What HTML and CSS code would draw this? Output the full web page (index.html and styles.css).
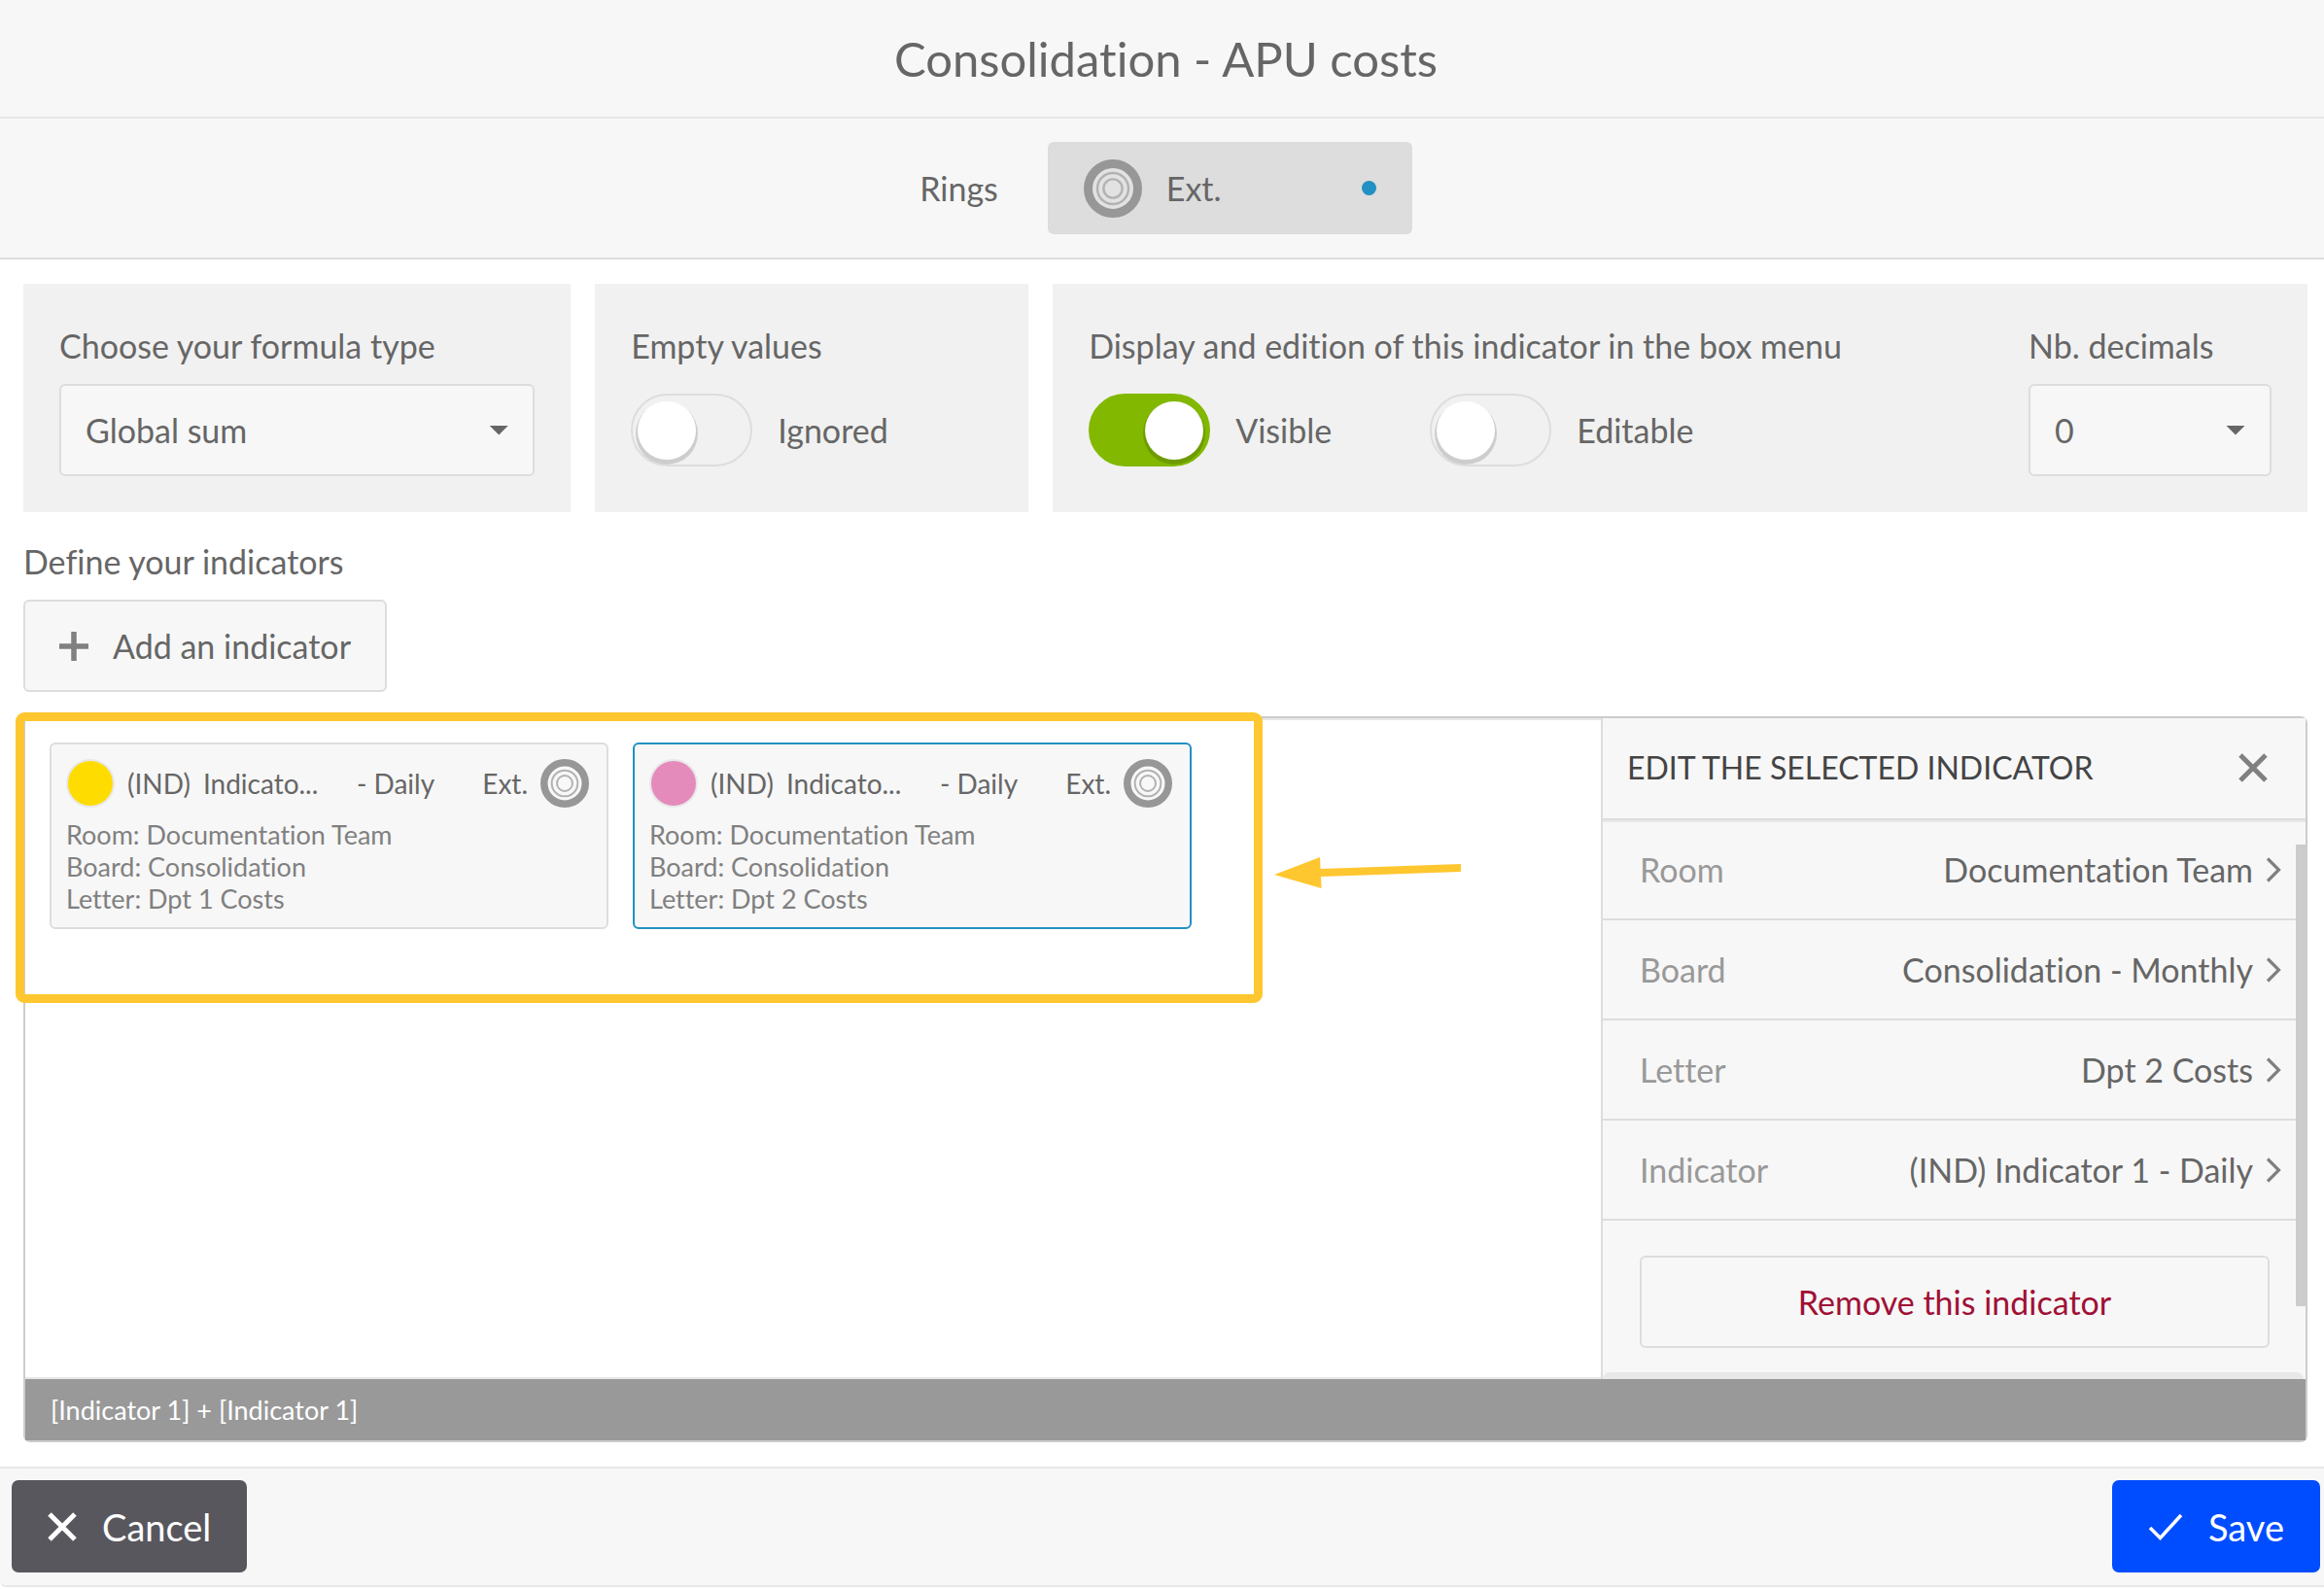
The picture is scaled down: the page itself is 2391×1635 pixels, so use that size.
FILE: index.html
```
<!DOCTYPE html>
<html lang="en">
<head>
<meta charset="utf-8">
<meta name="viewport" content="width=device-width, initial-scale=1">
<title>Consolidation - APU costs</title>
<link rel="stylesheet" href="styles.css">
</head>
<body>
<svg class="sprite" aria-hidden="true">
  <symbol id="ring" viewBox="0 0 60 60">
    <circle cx="30" cy="30" r="25.5" fill="#fff" fill-opacity=".15" stroke="#979797" stroke-width="9"/>
    <circle cx="30" cy="30" r="16" fill="none" stroke="#b2b2b2" stroke-width="2.4"/>
    <circle cx="30" cy="30" r="9.6" fill="none" stroke="#b2b2b2" stroke-width="2.4"/>
  </symbol>
  <symbol id="cross" viewBox="0 0 30 30">
    <path d="M2 2 28 28M28 2 2 28" fill="none" stroke="currentColor" stroke-width="5"/>
  </symbol>
  <symbol id="chevron" viewBox="0 0 16 26">
    <path d="M2 1.500 13.500 13 2 24.500" fill="none" stroke="currentColor" stroke-width="3.200"/>
  </symbol>
</svg>

<header class="titlebar"><h1 class="title">Consolidation - APU costs</h1></header>

<div class="rings">
  <span class="rings-label">Rings</span>
  <button class="ring-button" type="button">
    <svg class="ring-large"><use href="#ring"/></svg>
    <span class="ring-name">Ext.</span>
    <span class="status-dot"></span>
  </button>
</div>

<main class="content">
  <div class="options">
    <section class="option">
      <label class="option-label" for="formula">Choose your formula type</label>
      <div class="select-box">
        <select class="select" id="formula"><option>Global sum</option></select>
      </div>
    </section>
    <section class="option">
      <h2 class="option-label">Empty values</h2>
      <div class="controls">
        <label class="switch"><input class="toggle" type="checkbox">Ignored</label>
      </div>
    </section>
    <section class="option option-split">
      <div class="display-options">
        <h2 class="option-label">Display and edition of this indicator in the box menu</h2>
        <div class="controls">
          <label class="switch"><input class="toggle" type="checkbox" checked>Visible</label>
          <label class="switch"><input class="toggle" type="checkbox">Editable</label>
        </div>
      </div>
      <div class="decimals">
        <label class="option-label" for="decimals">Nb. decimals</label>
        <div class="select-box">
          <select class="select" id="decimals"><option>0</option></select>
        </div>
      </div>
    </section>
  </div>

  <h2 class="section-label">Define your indicators</h2>
  <button class="outline-button add-button" type="button">
    <svg class="icon" viewBox="0 0 30 30"><path d="M15 0V30M0 15H30" stroke="#808080" stroke-width="5.500"/></svg>
    Add an indicator
  </button>

  <section class="workspace">
    <div class="workspace-main">
      <div class="canvas">
        <article class="card">
          <div class="card-head">
            <span class="swatch swatch-yellow"></span>
            <span class="card-kind">(IND)</span>
            <span class="card-name">Indicato...</span>
            <span class="card-period">- Daily</span>
            <span class="card-ring">Ext.</span>
            <svg class="ring-small"><use href="#ring"/></svg>
          </div>
          <p class="card-line">Room: Documentation Team</p>
          <p class="card-line">Board: Consolidation</p>
          <p class="card-line">Letter: Dpt 1 Costs</p>
        </article>
        <article class="card card-selected">
          <div class="card-head">
            <span class="swatch swatch-pink"></span>
            <span class="card-kind">(IND)</span>
            <span class="card-name">Indicato...</span>
            <span class="card-period">- Daily</span>
            <span class="card-ring">Ext.</span>
            <svg class="ring-small"><use href="#ring"/></svg>
          </div>
          <p class="card-line">Room: Documentation Team</p>
          <p class="card-line">Board: Consolidation</p>
          <p class="card-line">Letter: Dpt 2 Costs</p>
        </article>
      </div>

      <aside class="editor">
        <div class="editor-head">
          <h2 class="editor-title">EDIT THE SELECTED INDICATOR</h2>
          <button class="close" type="button" aria-label="Close"><svg class="icon"><use href="#cross"/></svg></button>
        </div>
        <div class="editor-body">
          <button class="row" type="button"><span class="row-label">Room</span><span>Documentation Team</span><svg class="chevron"><use href="#chevron"/></svg></button>
          <button class="row" type="button"><span class="row-label">Board</span><span>Consolidation - Monthly</span><svg class="chevron"><use href="#chevron"/></svg></button>
          <button class="row" type="button"><span class="row-label">Letter</span><span>Dpt 2 Costs</span><svg class="chevron"><use href="#chevron"/></svg></button>
          <button class="row" type="button"><span class="row-label">Indicator</span><span>(IND) Indicator 1 - Daily</span><svg class="chevron"><use href="#chevron"/></svg></button>
          <button class="outline-button remove-button" type="button">Remove this indicator</button>
          <div class="next-block"></div>
        </div>
        <span class="scroll-thumb"></span>
      </aside>
    </div>
    <div class="formula">[Indicator 1] + [Indicator 1]</div>
    <div class="highlight"></div>
    <svg class="pointer" viewBox="0 0 192 32"><path d="M0 18 47 0 47.500 12 192 7V15L48 20 48.500 32Z" fill="#ffc72f"/></svg>
  </section>
</main>

<footer class="actions">
  <button class="action action-cancel" type="button"><svg class="icon"><use href="#cross"/></svg>Cancel</button>
  <button class="action action-save" type="button"><svg class="check" viewBox="0 0 36 28"><path d="M2 15 12.500 25.500 34 2" fill="none" stroke="currentColor" stroke-width="3.500"/></svg>Save</button>
</footer>
</body>
</html>
```
FILE: styles.css
```
* { box-sizing: border-box; }

body {
  margin: 0;
  min-height: 100vh;
  display: flex;
  flex-direction: column;
  background: #fff;
  color: #666;
  font: 34px/40px Lato, "Open Sans", sans-serif;
  font-variant-ligatures: none;
}

h1, h2, p { margin: 0; font-weight: 400; }
h2 { font-size: inherit; }
button, select { font: inherit; font-variant-ligatures: none; color: inherit; cursor: pointer; }
svg { flex: none; display: block; }

.sprite { position: absolute; width: 0; height: 0; }
.icon { width: 30px; height: 30px; }

.titlebar {
  height: 122px;
  display: flex;
  align-items: center;
  justify-content: center;
  padding-left: 8px;
  background: #f7f7f7;
  border-bottom: 2px solid #e8e8e8;
}
.title { font-size: 49px; line-height: 64px; }

.rings {
  height: 145px;
  display: flex;
  align-items: center;
  justify-content: center;
  gap: 51px;
  padding-left: 8px;
  background: #f7f7f7;
  border-bottom: 2px solid #ddd;
}
.ring-button {
  width: 375px;
  height: 95px;
  display: flex;
  align-items: center;
  gap: 25px;
  padding: 0 37px;
  border: 0;
  border-radius: 6px;
  background: #ddd;
}
.ring-large { width: 60px; height: 60px; }
.ring-small { width: 50px; height: 50px; }
.status-dot {
  width: 15px;
  height: 15px;
  margin-left: auto;
  border-radius: 50%;
  background: #2290c2;
}

.content {
  flex: 1;
  display: flex;
  flex-direction: column;
  align-items: flex-start;
  padding: 25px 17px 25px 24px;
}
.options {
  align-self: stretch;
  display: grid;
  grid-template-columns: 24fr 19fr 55fr;
  gap: 25px;
}
.option { padding: 44px 37px 37px; background: #f1f1f1; }
.option-split { display: flex; justify-content: space-between; }
.option-label { display: block; margin-bottom: 19px; white-space: nowrap; }
.decimals { width: 250px; }
.select-box { display: grid; align-items: center; }
.select-box::after {
  content: "";
  grid-area: 1 / 1;
  justify-self: end;
  width: 20px;
  height: 10px;
  margin-right: 27px;
  background: #666;
  clip-path: polygon(0 0, 100% 0, 50% 100%);
  pointer-events: none;
}
.select {
  grid-area: 1 / 1;
  appearance: none;
  height: 95px;
  padding: 0 25px;
  border: 2px solid #ddd;
  border-radius: 6px;
  background: #f7f7f7;
}
.controls { height: 95px; display: flex; align-items: center; gap: 101px; }
.switch { display: flex; align-items: center; gap: 26px; cursor: pointer; }
.toggle {
  appearance: none;
  display: flex;
  align-items: center;
  width: 125px;
  height: 75px;
  margin: 0;
  padding: 0 5px;
  border: 2px solid #ddd;
  border-radius: 38px;
}
.toggle::before {
  content: "";
  width: 60px;
  height: 60px;
  border-radius: 50%;
  background: #fff;
  box-shadow: 0 3px 0 2px rgba(0, 0, 0, .15);
}
.toggle:checked { justify-content: flex-end; border-color: #82b800; background: #82b800; }

.section-label { margin: 31px 0 19px; }
.outline-button {
  height: 95px;
  display: flex;
  align-items: center;
  justify-content: center;
  border: 2px solid #ddd;
  border-radius: 6px;
  background: #f7f7f7;
}
.add-button { gap: 25px; padding: 0 35px; }

.workspace {
  position: relative;
  flex: 1;
  align-self: stretch;
  display: flex;
  flex-direction: column;
  margin-top: 25px;
  border: 2px solid #ccc;
  border-radius: 7px;
}
.workspace-main { flex: 1; display: flex; }
.canvas {
  flex: 1;
  display: flex;
  align-items: flex-start;
  gap: 25px;
  padding: 23px 25px;
  border: solid #e8e8e8;
  border-width: 2px 0;
}
.card {
  width: 575px;
  height: 192px;
  padding: 15px 18px 15px 15px;
  border: 2px solid #ddd;
  border-radius: 6px;
  background: #f7f7f7;
  color: #808080;
  font-size: 27px;
  line-height: 33px;
}
.card-selected { border-color: #2290c2; }
.card-head {
  display: flex;
  align-items: center;
  margin-bottom: 11px;
  color: #666;
  font-size: 28px;
  line-height: 50px;
}
.swatch { width: 50px; height: 50px; border: 2px solid #e8e8e8; border-radius: 50%; }
.swatch-yellow { background: #ffdc00; }
.swatch-pink { background: #e58bbb; }
.card-kind { margin: 0 13px; }
.card-name { width: 132px; }
.card-period { margin-left: 26px; }
.card-ring { margin: 0 13px 0 auto; }

.editor {
  position: relative;
  width: 725px;
  background: #f7f7f7;
  border-left: 2px solid #ddd;
}
.editor-head {
  height: 105px;
  display: flex;
  align-items: center;
  justify-content: space-between;
  padding: 0 39px 2px 25px;
  border-bottom: 2px solid #ddd;
  box-shadow: 0 2px 0 #e8e8e8;
}
.editor-title { color: #444; font-size: 32px; }
.close { padding: 0; border: 0; background: none; color: #808080; }
.editor-body { margin-right: 10px; }
.row {
  width: 100%;
  height: 103px;
  display: flex;
  align-items: center;
  gap: 13px;
  padding: 0 15px 0 38px;
  border: 0;
  border-bottom: 2px solid #ddd;
  background: none;
}
.row-label { margin-right: auto; color: #999; }
.chevron { width: 16px; height: 26px; color: #808080; }
.remove-button { width: calc(100% - 65px); margin: 36px 27px 25px 38px; background: none; color: #a01035; }
.next-block { height: 7px; margin-right: -8px; border-radius: 7px 7px 0 0; background: #e8e8e8; }
.scroll-thumb { position: absolute; top: 130px; right: -2px; width: 12px; height: 475px; background: #ccc; }

.formula { height: 63px; padding-left: 26px; background: #999; color: #fff; font-size: 27px; line-height: 63px; }

/* Annotation over the indicator cards */
.highlight {
  position: absolute;
  top: -6px;
  left: -10px;
  width: 1283px;
  height: 299px;
  border: 9px solid #ffc72f;
  border-radius: 9px;
  pointer-events: none;
}
.pointer { position: absolute; top: 143px; left: 1285px; width: 192px; height: 32px; }

.actions {
  display: flex;
  justify-content: space-between;
  margin-bottom: 2px;
  padding: 12px 4px 13px 12px;
  background: #f7f7f7;
  border: solid #e8e8e8;
  border-width: 2px 0;
  border-radius: 0 0 0 6px;
}
.action {
  height: 95px;
  display: flex;
  align-items: center;
  gap: 26px;
  padding: 0 37px;
  border: 0;
  border-radius: 7px;
  color: #fff;
  font-size: 38px;
}
.action-cancel { background: #58575e; }
.action-save { background: #004dff; }
.check { width: 36px; height: 28px; }
```
